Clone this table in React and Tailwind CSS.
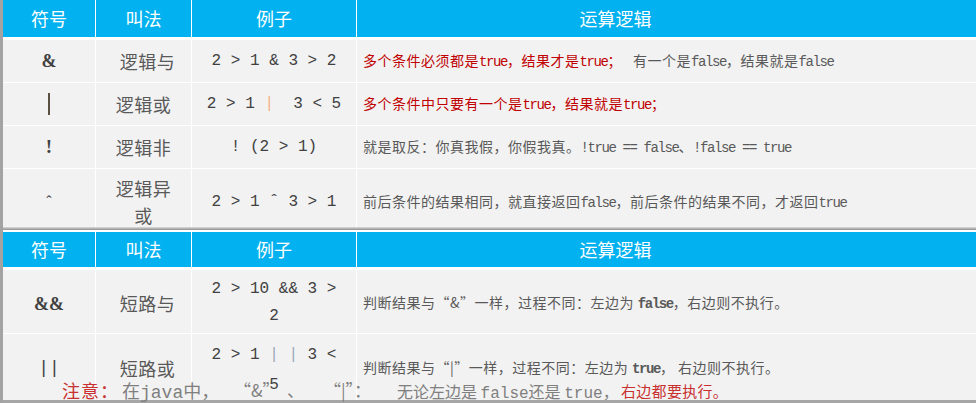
import React from "react";

const M = ({ children, className = "" }) => (
  <span className={`font-['Liberation_Mono',monospace] tracking-[-1.4px] ${className}`}>
    {children}
  </span>
);

const Head = ({ children, className = "" }) => (
  <div
    className={`bg-[#02b1ef] text-white text-[18px] flex items-center justify-center ${className}`}
  >
    {children}
  </div>
);

const Sym = ({ children, className = "" }) => (
  <div
    className={`bg-[#f2f2f2] flex items-center justify-center text-[#404040] ${className}`}
  >
    {children}
  </div>
);

const Name = ({ children, className = "" }) => (
  <div
    className={`bg-[#f2f2f2] flex items-center justify-center text-center text-[18px] leading-[27px] tracking-[0.5px] text-[#595959] ${className}`}
  >
    {children}
  </div>
);

const Ex = ({ children, className = "" }) => (
  <div
    className={`bg-[#f2f2f2] flex items-center justify-center text-center px-[13px] font-['Liberation_Mono',monospace] text-[16px] leading-[27px] text-[#404040] whitespace-pre-wrap ${className}`}
  >
    <span>{children}</span>
  </div>
);

const Logic = ({ children, className = "" }) => (
  <div
    className={`bg-[#f2f2f2] flex items-center pl-[6px] text-[14px] tracking-[0.5px] text-[#595959] whitespace-pre ${className}`}
  >
    <span>{children}</span>
  </div>
);

export default function App() {
  return (
    <div className="w-[976px] h-[403px] overflow-hidden relative flex bg-white font-['Noto_Sans_CJK_SC',sans-serif]">
      <div className="w-[3px] shrink-0 bg-[#a3a3a3]" />
      <div className="flex-1 flex flex-col">
        {/* 第一张表 */}
        <div className="grid grid-cols-[92px_95px_164px_1fr] gap-px bg-white">
          <Head className="h-[37px] mb-[2px]">符号</Head>
          <Head className="h-[37px] mb-[2px]">叫法</Head>
          <Head className="h-[37px] mb-[2px]">例子</Head>
          <Head className="h-[37px] mb-[2px] pr-[102px]">运算逻辑</Head>

          <Sym className="h-[42px] font-['Liberation_Serif',serif] font-bold text-[18px]">&amp;</Sym>
          <Name className="h-[42px] pl-[22px] pr-[14px]">逻辑与</Name>
          <Ex className="h-[42px]">2 &gt; 1 &amp; 3 &gt; 2</Ex>
          <Logic className="h-[42px]">
            <span className="text-[#c00000]">
              多个条件必须都是<M>true</M>，结果才是<M>true</M>；
            </span>
            {"   "}有一个是<M>false</M>，结果就是<M>false</M>
          </Logic>

          <Sym className="h-[42px]">
            <div className="w-[2px] h-[22px] bg-[#5a5040]" />
          </Sym>
          <Name className="h-[42px] px-[18px]">逻辑或</Name>
          <Ex className="h-[42px]">
            2 &gt; 1 <span className="text-[#f4b183]">|</span>  3 &lt; 5
          </Ex>
          <Logic className="h-[42px] text-[#c00000]">
            多个条件中只要有一个是<M>true</M>，结果就是<M>true</M>；
          </Logic>

          <Sym className="h-[42px] text-[19px] font-bold font-['Liberation_Serif',serif]">!</Sym>
          <Name className="h-[42px] px-[18px]">逻辑非</Name>
          <Ex className="h-[42px]">! (2 &gt; 1)</Ex>
          <Logic className="h-[42px]">
            就是取反：你真我假，你假我真。<M>!true == false</M>、<M>!false == true</M>
          </Logic>

          <Sym className="h-[58px] pt-[8px] text-[16px] font-['Liberation_Serif',serif]">ˆ</Sym>
          <Name className="h-[58px] pt-[8px] px-[18px]">逻辑异或</Name>
          <Ex className="h-[58px] pt-[8px]">2 &gt; 1 ˆ 3 &gt; 1</Ex>
          <Logic className="h-[58px] pt-[8px]">
            前后条件的结果相同，就直接返回<M>false</M>，前后条件的结果不同，才返回<M>true</M>
          </Logic>
        </div>

        <div className="h-[3px] bg-linear-to-b from-[#dcdcdc] to-[#8f8f8f]" />
        <div className="h-[2px] bg-white" />

        {/* 第二张表 */}
        <div className="grid grid-cols-[92px_95px_164px_1fr] gap-px bg-white">
          <Head className="h-[35px] mb-[2px]">符号</Head>
          <Head className="h-[35px] mb-[2px]">叫法</Head>
          <Head className="h-[35px] mb-[2px]">例子</Head>
          <Head className="h-[35px] mb-[2px] pr-[102px]">运算逻辑</Head>

          <Sym className="h-[63px] pt-[6px] font-['Liberation_Serif',serif] font-bold text-[18px]">&amp;&amp;</Sym>
          <Name className="h-[63px] pt-[3px] pl-[22px] pr-[14px]">短路与</Name>
          <Ex className="h-[63px] pt-[3px]">2 &gt; 10 &amp;&amp; 3 &gt; 2</Ex>
          <Logic className="h-[63px] pt-[3px] text-[#3f3f3f]">
            判断结果与“&amp;”一样，过程不同：左边为 <M className="font-bold">false</M>，右边则不执行。
          </Logic>

          <Sym className="h-[66px] pt-[2px] font-['Liberation_Mono',monospace] text-[18px] text-[#5a6070]">||</Sym>
          <Name className="h-[66px] pt-[2px] pl-[22px] pr-[14px]">短路或</Name>
          <Ex className="h-[66px] pt-[6px] leading-[30px]">
            2 &gt; 1 <span className="text-[#9aa8b8]">|</span> <span className="text-[#9aa8b8]">|</span> 3 &lt; 5
          </Ex>
          <Logic className="h-[66px] pt-[2px] text-[#3f3f3f]">
            判断结果与“|”一样，过程不同：左边为 <M className="font-bold">true</M>， 右边则不执行。
          </Logic>
        </div>

        <div className="h-[3px] bg-[#a6a6a6]" />
      </div>

      {/* 截图上叠着的注释 */}
      <span className="absolute left-[62px] top-[378px] text-[18px] leading-[24px] tracking-[1px] text-[#c8312f]">
        注意：
      </span>
      <span className="absolute left-[122px] top-[378px] text-[18px] leading-[24px] text-[#7f7f7f]">
        在<span className="font-['Liberation_Mono',monospace]">java</span>中，
      </span>
      <span className="absolute left-[234px] top-[378px] text-[17px] leading-[24px] text-[#7f7f7f]">
        “&amp;”
      </span>
      <span className="absolute left-[287px] top-[378px] text-[17px] leading-[24px] text-[#7f7f7f]">
        、
      </span>
      <span className="absolute left-[324px] top-[378px] text-[17px] leading-[24px] text-[#7f7f7f] whitespace-pre">
        “|”：
      </span>
      <span className="absolute left-[397px] top-[379px] text-[16px] leading-[24px] text-[#7f7f7f] whitespace-pre">
        无论左边是 <span className="font-['Liberation_Mono',monospace]">false</span>还是{" "}
        <span className="font-['Liberation_Mono',monospace]">true</span>，
      </span>
      <span className="absolute left-[621px] top-[379px] text-[15px] leading-[24px] tracking-[0.3px] text-[#c8312f]">
        右边都要执行。
      </span>
    </div>
  );
}
